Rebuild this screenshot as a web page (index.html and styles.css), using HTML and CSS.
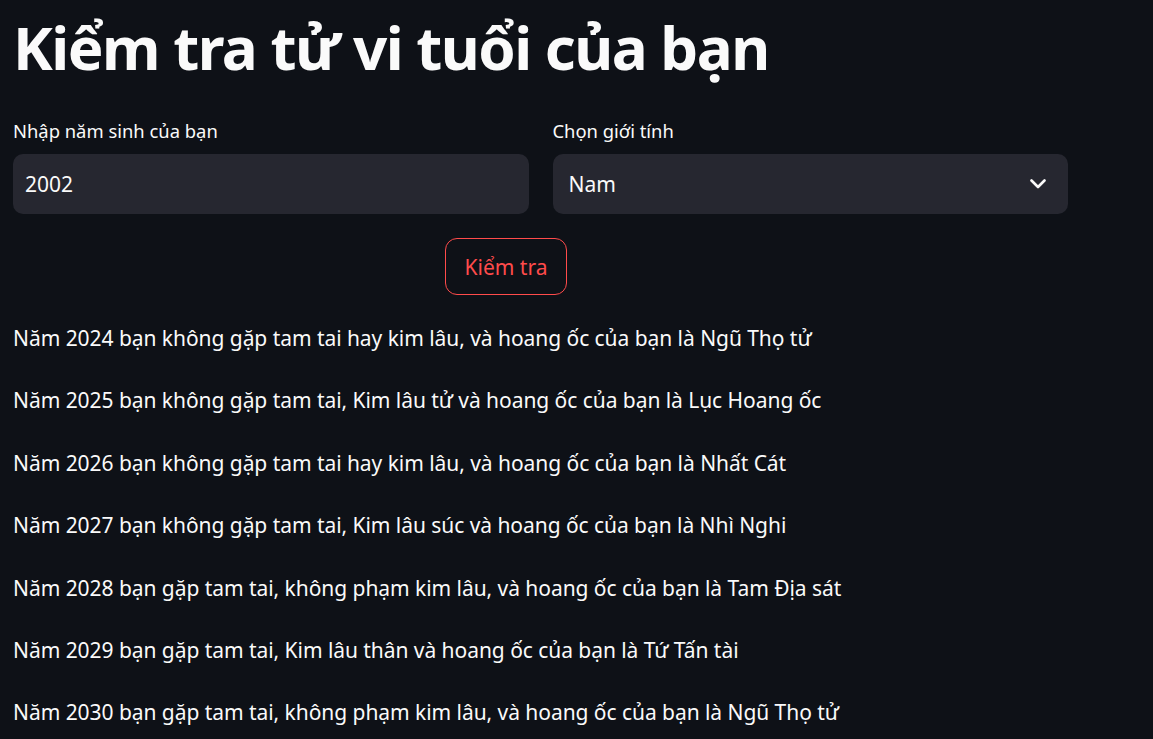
FILE: index.html
```html
<!DOCTYPE html>
<html lang="vi">
<head>
<meta charset="utf-8">
<title>Kiểm tra tử vi tuổi của bạn</title>
<link rel="stylesheet" href="styles.css">
</head>
<body>
<main class="main">
  <h1 class="title">Kiểm tra tử vi tuổi của bạn</h1>
  <div class="columns">
    <div class="field">
      <label class="label">Nhập năm sinh của bạn</label>
      <div class="input">2002</div>
    </div>
    <div class="field">
      <label class="label">Chọn giới tính</label>
      <div class="input select">
        <span>Nam</span>
        <svg class="chevron" width="16" height="10" viewBox="0 0 16 10"><polyline points="1.5,1.5 8,8 14.5,1.5" fill="none" stroke="#fafafa" stroke-width="2.6" stroke-linecap="round" stroke-linejoin="round"/></svg>
      </div>
    </div>
  </div>
  <div class="button-row">
    <button class="btn">Kiểm tra</button>
  </div>
  <div class="results">
    <p>Năm 2024 bạn không gặp tam tai hay kim lâu, và hoang ốc của bạn là Ngũ Thọ tử</p>
    <p>Năm 2025 bạn không gặp tam tai, Kim lâu tử và hoang ốc của bạn là Lục Hoang ốc</p>
    <p>Năm 2026 bạn không gặp tam tai hay kim lâu, và hoang ốc của bạn là Nhất Cát</p>
    <p>Năm 2027 bạn không gặp tam tai, Kim lâu súc và hoang ốc của bạn là Nhì Nghi</p>
    <p>Năm 2028 bạn gặp tam tai, không phạm kim lâu, và hoang ốc của bạn là Tam Địa sát</p>
    <p>Năm 2029 bạn gặp tam tai, Kim lâu thân và hoang ốc của bạn là Tứ Tấn tài</p>
    <p>Năm 2030 bạn gặp tam tai, không phạm kim lâu, và hoang ốc của bạn là Ngũ Thọ tử</p>
  </div>
</main>
</body>
</html>
```
FILE: styles.css
```css
html, body {
  margin: 0;
  padding: 0;
  background: #0e1117;
  color: #fafafa;
  font-family: "Noto Sans", "Open Sans", sans-serif;
  overflow: hidden;
}
.main {
  width: 1055px;
  padding: 0 0 0 13px;
}
.title {
  margin: 0;
  padding-top: 7px;
  font-size: 60px;
  line-height: 80px;
  font-weight: 700;
  letter-spacing: -1.5px;
  white-space: nowrap;
}
.columns {
  display: grid;
  grid-template-columns: 1fr 1fr;
  gap: 24px;
  margin-top: 29px;
}
.field {
  display: flex;
  flex-direction: column;
  gap: 8px;
}
.label {
  font-size: 18.4px;
  line-height: 30px;
  height: 30px;
}
.input {
  height: 60px;
  box-sizing: border-box;
  background: #262730;
  border-radius: 10px;
  padding: 0 12px;
  display: flex;
  align-items: center;
  font-size: 21px;
}
.select {
  padding: 0 22px 0 16px;
  justify-content: space-between;
}
.button-row {
  padding-left: 432px;
  margin-top: 24px;
}
.btn {
  width: 122px;
  height: 57px;
  border: 1px solid #ff4b4b;
  border-radius: 12px;
  background: transparent;
  color: #ff4b4b;
  font-family: inherit;
  font-size: 21px;
}
.results {
  margin-top: 24px;
}
.results p {
  margin: 0 0 24px;
  font-size: 21px;
  line-height: 38.4px;
  letter-spacing: -0.05px;
  white-space: nowrap;
}
```
